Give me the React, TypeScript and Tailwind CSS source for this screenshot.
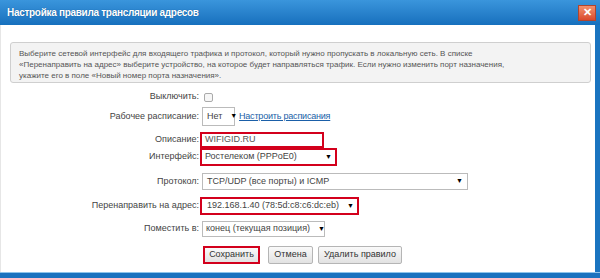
import React from "react";

const font = { fontFamily: '"Liberation Sans", Arial, sans-serif' };

const Arrow = () => <span className="ml-auto pl-2 text-[7px] text-black">▼</span>;

const Row = ({ label, className, children }: { label: string; className: string; children: React.ReactNode }) => (
  <div className={`flex items-center whitespace-nowrap ${className}`}>
    <div className="w-[201px] shrink-0 pr-[2px] text-right text-[9px] text-[#444]">{label}</div>
    {children}
  </div>
);

export default function App() {
  return (
    <div className="flex h-[278px] w-[600px] flex-col overflow-hidden bg-white" style={font}>
      {/* Title bar */}
      <div className="flex h-[25px] shrink-0 items-center bg-gradient-to-b from-[#3a95dc] to-[#1670bd] pl-[7px] pr-[4px]">
        <span className="text-[10px] font-bold tracking-[-0.3px] text-white [text-shadow:0_0_1px_#0b4f8a]">
          Настройка правила трансляции адресов
        </span>
        <div className="ml-auto flex h-[16px] w-[18px] items-center justify-center border border-[#b0452e] bg-gradient-to-b from-[#f2906d] to-[#d9482c] text-[11px] font-bold leading-none text-white">
          ✕
        </div>
      </div>

      {/* Body */}
      <div className="flex flex-1 flex-col border-r-[5px] border-[#1a74c0] border-l border-l-[#e6e6e6]">
        <div className="ml-[9px] mr-[4px] mt-[17px] h-[41px] rounded-[3px] border border-[#cfcfcf] bg-[#f3f3f3] pl-[8px] pt-[5px] text-[8px] leading-[11px] text-[#555]">
          Выберите сетевой интерфейс для входящего трафика и протокол, который нужно пропускать в локальную сеть. В списке
          <br />
          «Перенаправить на адрес» выберите устройство, на которое будет направляться трафик. Если нужно изменить порт назначения,
          <br />
          укажите его в поле «Новый номер порта назначения».
        </div>

        <div className="-ml-px flex flex-col">
          <Row label="Выключить:" className="mt-[7px] h-[14px]">
            <div className="ml-[3px] h-[9px] w-[9px] rounded-[2px] border border-[#aaa] bg-[#f6f6f6]" />
          </Row>

          <Row label="Рабочее расписание:" className="mt-[3px] h-[19px]">
            <div className="ml-[1px] flex h-[19px] w-[33px] items-center border border-[#bbb] bg-white px-[4px] text-[9px] text-[#444]">
              Нет <Arrow />
            </div>
            <a className="ml-[4px] text-[9px] tracking-[-0.2px] text-[#1a5fa8] underline">Настроить расписания</a>
          </Row>

          <Row label="Описание:" className="mt-[6px] h-[16px]">
            <div className="-ml-[1px] flex h-[16px] w-[124px] items-center border-2 border-[#d3001c] bg-white px-[3px] text-[9px] text-[#555]">
              WIFIGID.RU
            </div>
          </Row>

          <Row label="Интерфейс:" className="h-[18px]">
            <div className="-ml-[1px] flex h-[18px] w-[137px] items-center border-2 border-[#d3001c] bg-white px-[3px] text-[9px] text-[#444]">
              Ростелеком (PPPoE0) <Arrow />
            </div>
          </Row>

          <Row label="Протокол:" className="mt-[7px] h-[17px]">
            <div className="ml-[1px] flex h-[17px] w-[266px] items-center border border-[#bbb] bg-white pl-[4px] pr-[4px] text-[9px] text-[#444]">
              TCP/UDP (все порты) и ICMP <Arrow />
            </div>
          </Row>

          <Row label="Перенаправить на адрес:" className="mt-[7px] h-[18px]">
            <div className="-ml-[1px] flex h-[18px] w-[159px] items-center border-2 border-[#d3001c] bg-white px-[5px] text-[9px] text-[#444]">
              192.168.1.40 (78:5d:c8:c6:dc:eb) <Arrow />
            </div>
          </Row>

          <Row label="Поместить в:" className="mt-[6px] h-[16px]">
            <div className="ml-[1px] flex h-[16px] w-[123px] items-center border border-[#bbb] bg-white px-[3px] text-[9px] text-[#444]">
              конец (текущая позиция) <Arrow />
            </div>
          </Row>

          <div className="mt-[9px] flex h-[18px] items-center whitespace-nowrap pl-[203px]">
            <button className="flex h-[18px] w-[57px] items-center justify-center border-2 border-[#d3001c] bg-gradient-to-b from-[#fafafa] to-[#e2e2e2] text-[9px] text-[#333]">
              Сохранить
            </button>
            <button className="ml-[8px] flex h-[18px] w-[45px] items-center justify-center rounded-[2px] border border-[#b5b5b5] bg-gradient-to-b from-[#fafafa] to-[#e2e2e2] text-[9px] text-[#333]">
              Отмена
            </button>
            <button className="ml-[5px] flex h-[18px] w-[84px] items-center justify-center rounded-[2px] border border-[#b5b5b5] bg-gradient-to-b from-[#fafafa] to-[#e2e2e2] text-[9px] text-[#333]">
              Удалить правило
            </button>
          </div>
        </div>
      </div>

      {/* Bottom bar */}
      <div className="h-[6px] shrink-0 border-t border-[#8fc4ea] bg-[#1a72bf]" />
    </div>
  );
}
